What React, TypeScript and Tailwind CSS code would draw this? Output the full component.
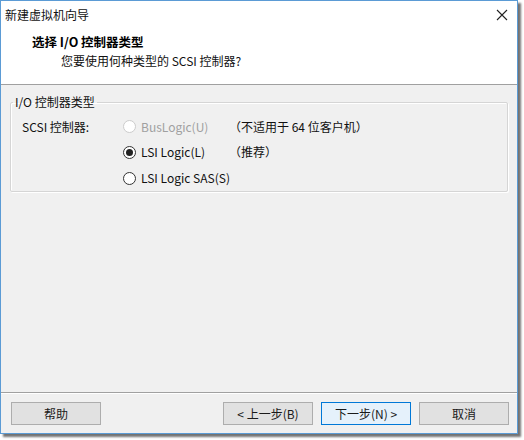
const font = { fontFamily: '"Noto Sans CJK SC", "Microsoft YaHei", sans-serif' };

function Radio({ checked, disabled }: { checked?: boolean; disabled?: boolean }) {
  return (
    <span
      className={`flex h-[13px] w-[13px] items-center justify-center rounded-full border bg-white ${
        disabled ? "border-[#cccccc]" : "border-[#333333]"
      }`}
    >
      {checked && <span className="h-[7px] w-[7px] rounded-full bg-[#222222]" />}
    </span>
  );
}

function Btn({ label, primary, className = "" }: { label: string; primary?: boolean; className?: string }) {
  return (
    <button
      className={`flex h-[23px] w-[90px] items-center justify-center border text-[12px] text-[#1a1a1a] ${
        primary ? "border-[#0078d7] bg-[#e5f1fb]" : "border-[#adadad] bg-[#e1e1e1]"
      } ${className}`}
    >
      {label}
    </button>
  );
}

export default function App() {
  return (
    <div className="h-[440px] w-[524px] bg-white" style={font}>
      <div className="flex h-[434px] w-[518px] flex-col border border-[#5b9bd5] bg-[#f0f0f0] shadow-[3px_3px_2px_rgba(0,0,0,0.55)]">
        {/* title bar */}
        <div className="flex h-[27px] items-center justify-between bg-white pl-[4px] pr-[9px]">
          <span className="text-[12px] text-[#111111]">新建虚拟机向导</span>
          <svg width="12" height="12" viewBox="0 0 12 12" className="mt-[1px]">
            <path d="M1 1L11 11M11 1L1 11" stroke="#222" strokeWidth="1.1" />
          </svg>
        </div>

        {/* header */}
        <div className="flex h-[57px] flex-col border-b border-[#a0a0a0] bg-white pl-[31px] pt-[4px]">
          <span className="text-[12.5px] font-bold leading-[20px] text-black">选择 I/O 控制器类型</span>
          <span className="pl-[29px] text-[12px] leading-[17px] text-[#111111]">您要使用何种类型的 SCSI 控制器?</span>
        </div>

        {/* body */}
        <div className="flex flex-1 flex-col px-[9px] pt-[9px]">
          <fieldset className="w-[498px] rounded-[2px] border border-[#d5d5d5] pl-[11px] shadow-[inset_1px_1px_0_#ffffff,1px_1px_0_#ffffff]">
            <legend className="ml-[-9px] px-[2px] text-[12px] leading-[16px] text-[#111111]">I/O 控制器类型</legend>
            <div className="flex pt-[4px] text-[12px] text-[#111111]">
              <div className="w-[101px] pt-[3px] leading-[20px]">SCSI 控制器:</div>
              <div className="flex flex-col">
                <div className="flex h-[25px] items-center">
                  <Radio disabled />
                  <span className="ml-[5px] w-[88px] text-[#a0a0a0]">BusLogic(U)</span>
                  <span>（不适用于 64 位客户机）</span>
                </div>
                <div className="flex h-[26px] items-center">
                  <Radio checked />
                  <span className="ml-[5px] w-[88px]">LSI Logic(L)</span>
                  <span>（推荐）</span>
                </div>
                <div className="flex h-[26px] items-center">
                  <Radio />
                  <span className="ml-[5px]">LSI Logic SAS(S)</span>
                </div>
              </div>
            </div>
          </fieldset>
        </div>

        {/* footer */}
        <div className="flex h-[41px] items-start border-t border-[#a0a0a0] pl-[10px] pt-[9px] shadow-[inset_0_1px_0_#ffffff]">
          <Btn label="帮助" />
          <Btn label="< 上一步(B)" className="ml-[122px]" />
          <Btn label="下一步(N) >" primary className="ml-[8px]" />
          <Btn label="取消" className="ml-[8px]" />
        </div>
      </div>
    </div>
  );
}
